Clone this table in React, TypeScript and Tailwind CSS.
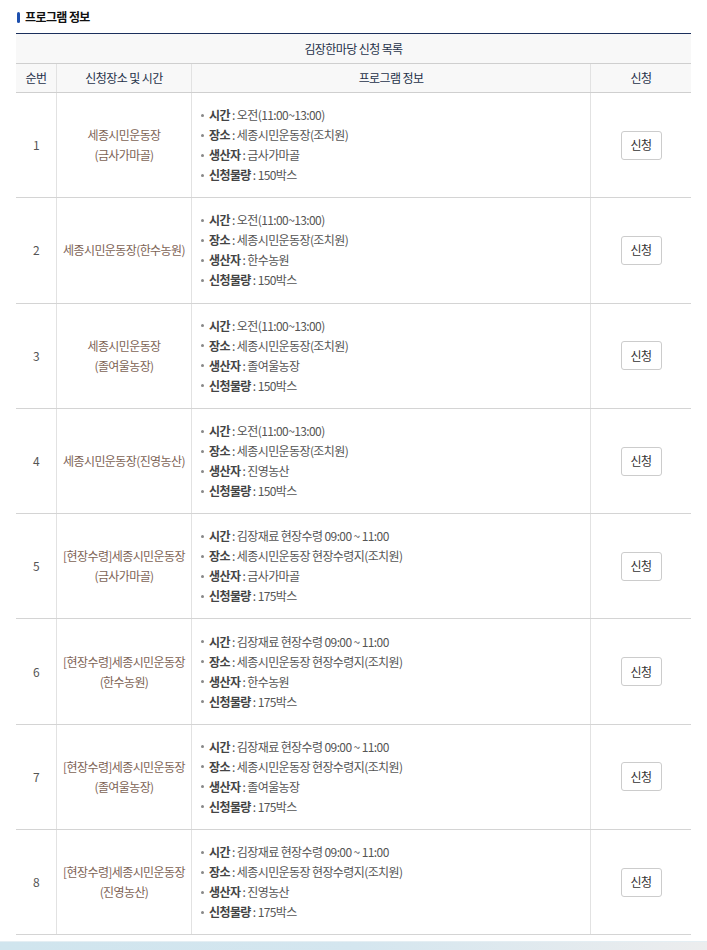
import React from "react";

type Row = {
  no: number;
  place: string[];
  time: string;
  loc: string;
  producer: string;
  qty: string;
};

const rows: Row[] = [
  { no: 1, place: ["세종시민운동장", "(금사가마골)"], time: "오전(11:00~13:00)", loc: "세종시민운동장(조치원)", producer: "금사가마골", qty: "150박스" },
  { no: 2, place: ["세종시민운동장(한수농원)"], time: "오전(11:00~13:00)", loc: "세종시민운동장(조치원)", producer: "한수농원", qty: "150박스" },
  { no: 3, place: ["세종시민운동장", "(졸여울농장)"], time: "오전(11:00~13:00)", loc: "세종시민운동장(조치원)", producer: "졸여울농장", qty: "150박스" },
  { no: 4, place: ["세종시민운동장(진영농산)"], time: "오전(11:00~13:00)", loc: "세종시민운동장(조치원)", producer: "진영농산", qty: "150박스" },
  { no: 5, place: ["[현장수령]세종시민운동장", "(금사가마골)"], time: "김장재료 현장수령 09:00 ~ 11:00", loc: "세종시민운동장 현장수령지(조치원)", producer: "금사가마골", qty: "175박스" },
  { no: 6, place: ["[현장수령]세종시민운동장", "(한수농원)"], time: "김장재료 현장수령 09:00 ~ 11:00", loc: "세종시민운동장 현장수령지(조치원)", producer: "한수농원", qty: "175박스" },
  { no: 7, place: ["[현장수령]세종시민운동장", "(졸여울농장)"], time: "김장재료 현장수령 09:00 ~ 11:00", loc: "세종시민운동장 현장수령지(조치원)", producer: "졸여울농장", qty: "175박스" },
  { no: 8, place: ["[현장수령]세종시민운동장", "(진영농산)"], time: "김장재료 현장수령 09:00 ~ 11:00", loc: "세종시민운동장 현장수령지(조치원)", producer: "진영농산", qty: "175박스" },
];

const font = { fontFamily: '"Noto Sans CJK KR", "Noto Sans", sans-serif' };

function Item({ label, value }: { label: string; value: string }) {
  return (
    <li className="flex items-center h-[20px]">
      <span className="w-[3px] h-[3px] rounded-full bg-[#888] mr-[5px] shrink-0" />
      <span className="font-bold text-[#444]">{label}</span>
      <span className="text-[#555]">&nbsp;: {value}</span>
    </li>
  );
}

export default function App() {
  return (
    <div className="w-[707px] h-[950px] bg-white relative overflow-hidden text-[12px] tracking-[-0.6px]" style={font}>
      <div className="px-[16px] pt-[9px]">
        <div className="flex items-center h-[16px] mb-[8px]">
          <span className="w-[3px] h-[11px] rounded-[2px] bg-[#1d4fae] ml-[1px] mr-[5px]" />
          <span className="font-bold text-[12px] text-[#111]">프로그램 정보</span>
        </div>
        <div className="w-[675px] border-t-[1px] border-[#1b2f5c]">
          <div className="h-[30px] flex items-center justify-center bg-[#f8f8f8] border-b border-[#cfcfcf] text-[#26324a]">
            김장한마당 신청 목록
          </div>
          <div className="grid grid-cols-[40px_135px_399px_101px] h-[29px] bg-[#f8f8f8] border-b border-[#cfcfcf] text-[#26324a]">
            <div className="flex items-center justify-center">순번</div>
            <div className="flex items-center justify-center border-l border-[#e2e2e2]">신청장소 및 시간</div>
            <div className="flex items-center justify-center border-l border-[#e2e2e2]">프로그램 정보</div>
            <div className="flex items-center justify-center border-l border-[#e2e2e2]">신청</div>
          </div>
          {rows.map((r) => (
            <div
              key={r.no}
              className="grid grid-cols-[40px_135px_399px_101px] h-[105.3px] border-b border-[#d4d4d4]"
            >
              <div className="flex items-center justify-center text-[#555]">{r.no}</div>
              <div className="flex flex-col items-center justify-center border-l border-[#e2e2e2] text-[#7d6355] leading-[20px] text-center">
                {r.place.map((p) => (
                  <div key={p}>{p}</div>
                ))}
              </div>
              <div className="flex items-center border-l border-[#e2e2e2] pl-[9px]">
                <ul>
                  <Item label="시간" value={r.time} />
                  <Item label="장소" value={r.loc} />
                  <Item label="생산자" value={r.producer} />
                  <Item label="신청물량" value={r.qty} />
                </ul>
              </div>
              <div className="flex items-center justify-center border-l border-[#e2e2e2]">
                <button className="w-[41px] h-[29px] border border-[#cccccc] rounded-[3px] bg-white text-[#333] text-[12px]">
                  신청
                </button>
              </div>
            </div>
          ))}
        </div>
      </div>
      <div className="absolute left-0 right-0 top-[941px] h-[9px] bg-gradient-to-r from-[#d0e5ee] via-[#d4e6ef] to-[#ecedee] border-t border-[#e4eef3]" />
    </div>
  );
}
